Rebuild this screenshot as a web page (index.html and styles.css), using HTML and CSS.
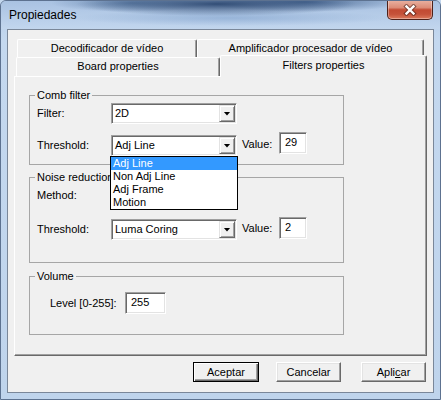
FILE: index.html
```html
<!DOCTYPE html>
<html lang="es">
<head>
<meta charset="utf-8">
<title>Propiedades</title>
<link rel="stylesheet" href="styles.css">
</head>
<body>
<div class="window">
  <div class="titlebar">
    <span class="title">Propiedades</span>
    <div class="close">
      <svg width="14" height="12" viewBox="0 0 14 12"><path d="M3.5 2.5 L10.5 9.5 M10.5 2.5 L3.5 9.5" stroke="#3b1a14" stroke-width="4.4" stroke-linecap="square" opacity=".55" fill="none"/><path d="M3.5 2.5 L10.5 9.5 M10.5 2.5 L3.5 9.5" stroke="#fff" stroke-width="2.4" stroke-linecap="square" fill="none"/></svg>
    </div>
  </div>
  <div class="client">
    <div class="tabrow back">
      <div class="tab t1">Decodificador de vídeo</div>
      <div class="tab t2">Amplificador procesador de vídeo</div>
    </div>
    <div class="tabrow front">
      <div class="tab t3">Board properties</div>
      <div class="tab t4">Filters properties</div>
    </div>
    <div class="panel">
      <fieldset class="group comb">
        <legend>Comb filter</legend>
        <div class="rows">
          <div class="row">
            <span class="lbl">Filter:</span>
            <div class="combo"><span class="val">2D</span><span class="btn"></span></div>
          </div>
          <div class="row">
            <span class="lbl">Threshold:</span>
            <div class="combo open">
              <span class="val">Adj Line</span><span class="btn"></span>
              <ul class="list">
                <li class="hl">Adj Line</li>
                <li>Non Adj Line</li>
                <li>Adj Frame</li>
                <li>Motion</li>
              </ul>
            </div>
            <span class="vlbl">Value:</span>
            <div class="edit up3">29</div>
          </div>
        </div>
      </fieldset>
      <fieldset class="group noise">
        <legend>Noise reduction</legend>
        <div class="rows">
          <div class="row">
            <span class="lbl">Method:</span>
            <div class="combo"><span class="val"></span><span class="btn"></span></div>
          </div>
          <div class="row">
            <span class="lbl">Threshold:</span>
            <div class="combo"><span class="val">Luma Coring</span><span class="btn"></span></div>
            <span class="vlbl">Value:</span>
            <div class="edit up2">2</div>
          </div>
        </div>
      </fieldset>
      <fieldset class="group volume">
        <legend>Volume</legend>
        <div class="rows">
          <div class="row">
            <span class="lbl lvl">Level [0-255]:</span>
            <div class="edit wide">255</div>
          </div>
        </div>
      </fieldset>
    </div>
    <div class="buttons">
      <div class="button default">Aceptar</div>
      <div class="button cancel">Cancelar</div>
      <div class="button apply">Apli<u>c</u>ar</div>
    </div>
  </div>
</div>
</body>
</html>
```
FILE: styles.css
```css
* { box-sizing: border-box; }
html, body { margin: 0; padding: 0; }
body {
  font-family: "Liberation Sans", Arial, sans-serif;
  font-size: 11px;
  color: #000;
  background: #c3d7ee;
}
.window {
  width: 441px;
  height: 400px;
  display: flex;
  flex-direction: column;
  border: 1px solid #5d7290;
  border-radius: 6px 6px 0 0;
  background: linear-gradient(to bottom, #b5cce8 0, #c4d8ef 40px, #bfd4ec 100%);
  overflow: hidden;
}
.titlebar {
  height: 28px;
  display: flex;
  align-items: flex-start;
  padding-left: 8px;
  background:
    radial-gradient(ellipse 140px 12px at 215px 3px, rgba(30,58,100,.85), rgba(30,58,100,0)),
    radial-gradient(ellipse 100px 10px at 305px 1px, rgba(40,72,118,.7), rgba(40,72,118,0)),
    radial-gradient(ellipse 80px 9px at 130px 2px, rgba(55,90,135,.55), rgba(55,90,135,0)),
    radial-gradient(ellipse 160px 8px at 230px 17px, rgba(120,155,200,.5), rgba(120,155,200,0)),
    linear-gradient(to bottom, #a9c2e2 0, #c2d6ee 100%);
}
.title {
  margin-top: 7px;
  line-height: 14px;
  font-size: 12px;
  color: #000;
}
.close {
  margin-left: auto;
  margin-right: 7px;
  margin-top: -1px;
  width: 46px;
  height: 20px;
  border: 1px solid #4d2119;
  border-top: none;
  border-radius: 0 0 5px 5px;
  background: linear-gradient(to bottom, #eab3a3 0%, #dc8c77 40%, #c24a32 52%, #c5523a 75%, #dc7a5c 100%);
  box-shadow: inset 0 0 0 1px rgba(255,255,255,.35);
  display: flex;
  align-items: center;
  justify-content: center;
}
.client {
  flex: 1;
  margin: 0 6px 6px 6px;
  border: 1px solid #7a8799;
  background: #f0f0f0;
  display: flex;
  flex-direction: column;
}
.tabrow {
  display: flex;
  align-items: flex-end;
}
.tabrow.back {
  margin-top: 9px;
  margin-left: 9px;
  height: 18px;
}
.tabrow.front {
  margin-left: 8px;
  height: 19px;
}
.tab {
  background: #f0f0f0;
  border-top: 1px solid #fff;
  border-left: 1px solid #fff;
  border-right: 1px solid #696969;
  box-shadow: inset -1px 0 #a0a0a0;
  border-radius: 2px 2px 0 0;
  text-align: center;
  white-space: nowrap;
}
.t1 { width: 180px; height: 18px; line-height: 16px; }
.t2 { width: 227px; height: 18px; line-height: 16px; }
.t3 { width: 204px; height: 19px; line-height: 17px; }
.t4 {
  width: 207px;
  height: 22px;
  line-height: 18px;
  margin-bottom: -1px;
  position: relative;
  z-index: 1;
}
.panel {
  margin-left: 6px;
  width: 413px;
  height: 280px;
  border-top: 1px solid #fff;
  border-left: 1px solid #fff;
  border-right: 1px solid #696969;
  border-bottom: 1px solid #696969;
  box-shadow: inset -1px -1px #a0a0a0;
  padding: 12px 0 0 14px;
}
.group {
  margin: 0;
  padding: 0;
  width: 315px;
  border: 1px solid #a6a6a6;
  min-width: 0;
}
.group legend {
  margin-left: 5px;
  padding: 0 2px;
  line-height: 13px;
  font-size: 11px;
}
.noise { margin-top: 6px; }
.volume { margin-top: 7px; }
.rows {
  display: flex;
  flex-direction: column;
  padding-left: 7px;
}
.comb .rows { padding-top: 1px; padding-bottom: 8px; gap: 11px; }
.noise .rows { padding-top: 1px; padding-bottom: 22px; gap: 13px; }
.volume .rows { padding-top: 9px; padding-bottom: 21px; padding-left: 20px; }
.row {
  display: flex;
  align-items: flex-start;
  height: 21px;
}
.lbl {
  width: 74px;
  line-height: 21px;
}
.lbl.lvl { width: 75px; line-height: 22px; }
.combo {
  position: relative;
  width: 126px;
  height: 21px;
  display: flex;
  border: 1px solid;
  border-color: #a0a0a0 #fff #fff #a0a0a0;
  padding: 1px;
  background: #fff;
  box-shadow: inset 1px 1px #696969, inset -1px -1px #e3e3e3;
}
.combo.open { z-index: 5; }
.val {
  flex: 1;
  padding-left: 2px;
  line-height: 17px;
  white-space: nowrap;
}
.btn {
  width: 16px;
  height: 17px;
  background: #f0f0f0;
  border: 1px solid;
  border-color: #e3e3e3 #696969 #696969 #e3e3e3;
  box-shadow: inset 1px 1px #fff, inset -1px -1px #a0a0a0;
  display: flex;
  align-items: center;
  justify-content: center;
}
.btn::after {
  content: "";
  width: 7px;
  height: 4px;
  background: #000;
  clip-path: polygon(0 0, 100% 0, 50% 100%);
}
.list {
  position: absolute;
  top: 100%;
  left: -2px;
  width: 128px;
  margin: 1px 0 0 0;
  padding: 0;
  list-style: none;
  background: #fff;
  border: 1px solid #000;
}
.list li {
  height: 13px;
  line-height: 13px;
  padding-left: 2px;
  white-space: nowrap;
}
.list li.hl {
  background: #3399ff;
  color: #fff;
}
.vlbl {
  width: 37px;
  margin-left: 5px;
  line-height: 19px;
}
.edit {
  width: 28px;
  height: 22px;
  border: 1px solid;
  border-color: #a0a0a0 #fff #fff #a0a0a0;
  box-shadow: inset 1px 1px #696969, inset -1px -1px #e3e3e3;
  background: #fff;
  padding-left: 5px;
  line-height: 18px;
}
.edit.up3 { margin-top: -3px; }
.edit.up2 { margin-top: -2px; }
.edit.wide { width: 41px; line-height: 19px; }
.buttons {
  display: flex;
  justify-content: flex-end;
  margin-top: 6px;
  padding-right: 7px;
}
.button {
  width: 65px;
  height: 20px;
  line-height: 18px;
  text-align: center;
  background: #f0f0f0;
  border: 1px solid;
  border-color: #fff #696969 #696969 #fff;
  box-shadow: inset -1px -1px #a0a0a0, inset 1px 1px #e3e3e3;
}
.button.default {
  width: 66px;
  border-color: #000;
  box-shadow: inset 1px 1px #fff, inset -1px -1px #696969, inset -2px -2px #a0a0a0;
}
.button.cancel { margin-left: 17px; }
.button.apply { margin-left: 20px; }
.button u { text-decoration: underline; }
```
